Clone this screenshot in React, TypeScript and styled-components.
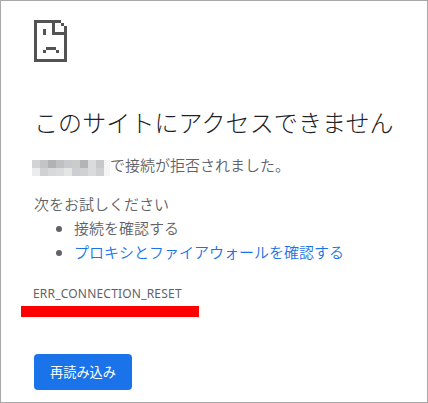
import styled, { createGlobalStyle } from "styled-components";

const GlobalStyle = createGlobalStyle`
  * { box-sizing: border-box; }
  body { margin: 0; background: #fff; }
`;

const Page = styled.main`
  width: 428px;
  height: 403px;
  border: 1px solid #a8a8a8;
  padding: 19px 0 0 33px;
  overflow: hidden;
  color: #5f6368;
  font: 350 15px/24px "Noto Sans CJK JP", sans-serif;
  white-space: nowrap;
`;

const PageIcon = styled.svg`
  display: block;
  width: 33px;
  height: 42px;
`;

const Title = styled.h1`
  margin: 42px 0 0;
  height: 37px;
  font-size: 24px;
  line-height: 36px;
  font-weight: 300;
  letter-spacing: 0.1px;
  color: #202124;
`;

const Message = styled.p`
  margin: 12px 0 0;
  height: 24px;
  display: flex;
  align-items: center;
`;

const Mosaic = styled.span`
  display: grid;
  grid-template-columns: repeat(9, 8px) 6px;
  grid-auto-rows: 8px;
  margin: 6px 0 0 -2px;
`;

const Tile = styled.span<{ $tone: string }>`
  background: ${(p) => p.$tone};
`;

const Suggestions = styled.section`
  margin-top: 15px;
`;

const List = styled.ul`
  margin: 0;
  padding: 0 0 0 40px;
`;

const Item = styled.li`
  height: 24px;
`;

const Link = styled.a`
  color: #1a73e8;
  text-decoration: none;
`;

const ErrorCode = styled.div`
  margin: 20px 0 0 -1px;
  height: 20px;
  font: 12px/20px "Noto Sans", sans-serif;
  letter-spacing: 0.2px;
`;

const Underline = styled.div`
  margin: 2px 0 0 -13px;
  width: 178px;
  height: 11px;
  background: #f00;
`;

const Reload = styled.button`
  display: block;
  margin-top: 37px;
  width: 98px;
  height: 36px;
  padding: 0;
  border: 0;
  border-radius: 4px;
  background: #1a73e8;
  color: #fff;
  font: 400 13.2px/36px "Noto Sans CJK JP", sans-serif;
`;

const tiles = [
  "#d2d3d4", "#c3c4c6", "#b1b2b5", "#bfc0c2", "#c8c9ca", "#cbcbcc", "#b3b4b7", "#dbdbdd", "#c7c8ca", "#f5f5f5",
  "#ececec", "#d0d1d2", "#d8d9da", "#dbdcdd", "#e4e5e5", "#cdced0", "#d0d1d2", "#dadbdc", "#cfd0d1", "#f5f5f5",
];

export default function App() {
  return (
    <>
      <GlobalStyle />
      <Page>
        <PageIcon viewBox="0 0 33 42" fill="#535353" shapeRendering="crispEdges">
          <path d="M0 0H27V3H30V6H33V42H0ZM3 3V39H30V15H18V3ZM21 3V12H30V6H27V3Z" fillRule="evenodd" />
          <path d="M9 9h3v6H9zM12 27h10v3H12zM9 30h3v3H9zM22 30h3v3h-3z" />
        </PageIcon>
        <Title>このサイトにアクセスできません</Title>
        <Message>
          <Mosaic>
            {tiles.map((tone, i) => (
              <Tile key={i} $tone={tone} />
            ))}
          </Mosaic>
          で接続が拒否されました。
        </Message>
        <Suggestions>
          次をお試しください
          <List>
            <Item>接続を確認する</Item>
            <Item>
              <Link>プロキシとファイアウォールを確認する</Link>
            </Item>
          </List>
        </Suggestions>
        <ErrorCode>ERR_CONNECTION_RESET</ErrorCode>
        <Underline />
        <Reload>再読み込み</Reload>
      </Page>
    </>
  );
}
